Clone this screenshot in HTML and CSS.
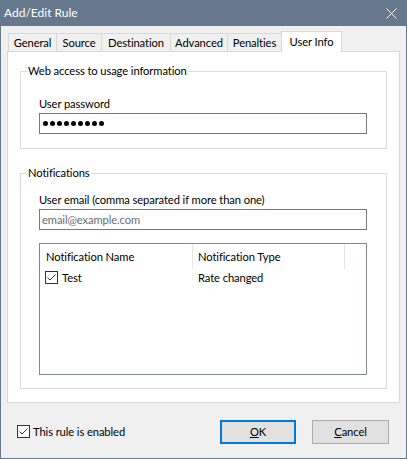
FILE: index.html
```html
<!DOCTYPE html>
<html>
<head>
<meta charset="utf-8">
<link rel="stylesheet" href="styles.css">
</head>
<body>
<div class="window">
  <div class="titlebar">
    <span class="title">Add/Edit Rule</span>
    <svg class="close" width="11" height="11" viewBox="0 0 11 11"><path d="M0.5 0.5 L10.5 10.5 M10.5 0.5 L0.5 10.5" stroke="#fff" stroke-width="1" fill="none"/></svg>
  </div>
  <div class="tabs">
    <div class="tab t-general">General</div>
    <div class="tab t-source">Source</div>
    <div class="tab t-dest">Destination</div>
    <div class="tab t-adv">Advanced</div>
    <div class="tab t-pen">Penalties</div>
    <div class="tab active t-user">User Info</div>
  </div>
  <div class="panel">
    <fieldset class="group g1">
      <legend>Web access to usage information</legend>
      <div class="gbody b1">
        <div class="lbl">User password</div>
        <div class="field pw">
          <span class="dot"></span><span class="dot"></span><span class="dot"></span><span class="dot"></span><span class="dot"></span><span class="dot"></span><span class="dot"></span><span class="dot"></span><span class="dot"></span>
        </div>
      </div>
    </fieldset>
    <fieldset class="group g2">
      <legend>Notifications</legend>
      <div class="gbody b2">
        <div class="lbl">User email (comma separated if more than one)</div>
        <div class="field email"><span class="placeholder">email@example.com</span></div>
        <div class="listview">
          <div class="lv-head">
            <div class="hcell c1">Notification Name</div>
            <div class="hcell c2">Notification Type</div>
          </div>
          <div class="lv-row">
            <div class="cell c1">
              <svg class="chk" width="13" height="13" viewBox="0 0 13 13"><rect x="0.5" y="0.5" width="12" height="12" fill="#fff" stroke="#333"/><polyline points="2.5,6.5 5,9 10.5,3.5" fill="none" stroke="#333" stroke-width="1"/></svg>
              <span class="ctext">Test</span>
            </div>
            <div class="cell c2">Rate changed</div>
          </div>
        </div>
      </div>
    </fieldset>
  </div>
  <div class="footer">
    <svg class="chk" width="13" height="13" viewBox="0 0 13 13"><rect x="0.5" y="0.5" width="12" height="12" fill="#fff" stroke="#333"/><polyline points="2.5,6.5 5,9 10.5,3.5" fill="none" stroke="#333" stroke-width="1"/></svg>
    <span class="enabled">This rule is enabled</span>
    <div class="buttons">
      <div class="btn ok"><u>O</u>K</div>
      <div class="btn cancel"><u>C</u>ancel</div>
    </div>
  </div>
</div>
</body>
</html>
```

FILE: styles.css
```css
* { box-sizing: border-box; }
html, body { margin: 0; padding: 0; }
body {
  font-family: Lato, "Liberation Sans", sans-serif;
  font-size: 11.2px;
  letter-spacing: -0.1px;
  color: #000;
  background: #fff;
}
.window {
  width: 407px;
  height: 459px;
  border: 1px solid #66788c;
  border-top: none;
  background: #f0f0f0;
  display: flex;
  flex-direction: column;
}
.titlebar {
  height: 26px;
  flex: none;
  background: #66788c;
  color: #fff;
  display: flex;
  align-items: center;
  justify-content: space-between;
  padding: 0 9px 0 3px;
}
.title { line-height: 16px; font-size: 12px; letter-spacing: 0; }
.close { display: block; }

.tabs {
  display: flex;
  align-items: flex-end;
  height: 20px;
  margin: 5px 0 0 7px;
  flex: none;
}
.tab {
  height: 18px;
  line-height: 17px;
  border: 1px solid #d9d9d9;
  border-bottom: none;
  border-right: none;
  text-align: center;
  background: #f0f0f0;
}
.t-general { width: 48px; }
.t-source { width: 45px; }
.t-dest { width: 69px; }
.t-adv { width: 57px; }
.t-pen { width: 54px; }
.tab.active {
  width: 61px;
  height: 21px;
  line-height: 20px;
  background: #fff;
  border-right: 1px solid #d9d9d9;
  margin-bottom: -1px;
  position: relative;
  z-index: 1;
}

.panel {
  flex: none;
  height: 352px;
  margin: 0 6px;
  border: 1px solid #d9d9d9;
  background: #fff;
  padding: 0 12px;
}
.group {
  margin: 0;
  padding: 0;
  border: 1px solid #dcdcdc;
  min-width: 0;
}
.g1 { margin-top: 11px; }
.g2 { margin-top: 16px; }
.group legend {
  padding: 0 1px;
  margin-left: 6px;
  line-height: 16px;
}
.gbody { padding: 0 17px 0 18px; }
.b1 { padding-top: 17px; padding-bottom: 14px; }
.b2 { padding-top: 11px; padding-bottom: 13px; }
.lbl { line-height: 15px; }
.field {
  width: 328px;
  height: 21px;
  margin-top: 2px;
  border: 1px solid #7a7a7a;
  background: #fff;
  display: flex;
  align-items: center;
  padding-left: 2px;
}
.pw { padding-left: 3px; }
.dot {
  width: 5px;
  height: 5px;
  border-radius: 50%;
  background: #000;
  margin-right: 2px;
}
.placeholder { color: #6d6d6d; line-height: 15px; }

.listview {
  width: 328px;
  height: 132px;
  margin-top: 13px;
  border: 1px solid #828790;
  background: #fff;
}
.lv-head { display: flex; height: 25px; }
.hcell {
  line-height: 25px;
  border-right: 1px solid #e5e5e5;
}
.hcell.c1 { width: 153px; padding-left: 6px; }
.hcell.c2 { width: 152px; padding-left: 5px; }
.lv-row { display: flex; height: 17px; align-items: center; }
.cell { display: flex; align-items: center; line-height: 15px; }
.cell.c1 { width: 153px; padding-left: 5px; }
.cell.c2 { padding-left: 5px; }
.chk { display: block; flex: none; }
.ctext { margin-left: 4px; }

.footer {
  flex: 1;
  display: flex;
  align-items: center;
  padding: 2px 17px 0 16px;
}
.enabled { margin-left: 3px; line-height: 15px; }
.buttons { margin-left: auto; display: flex; gap: 16px; }
.btn {
  height: 24px;
  background: #e1e1e1;
  display: flex;
  align-items: center;
  justify-content: center;
}
.btn u { text-decoration-thickness: 1px; text-underline-offset: 1px; }
.ok { width: 76px; border: 2px solid #0078d7; }
.cancel { width: 77px; border: 1px solid #adadad; }
```
